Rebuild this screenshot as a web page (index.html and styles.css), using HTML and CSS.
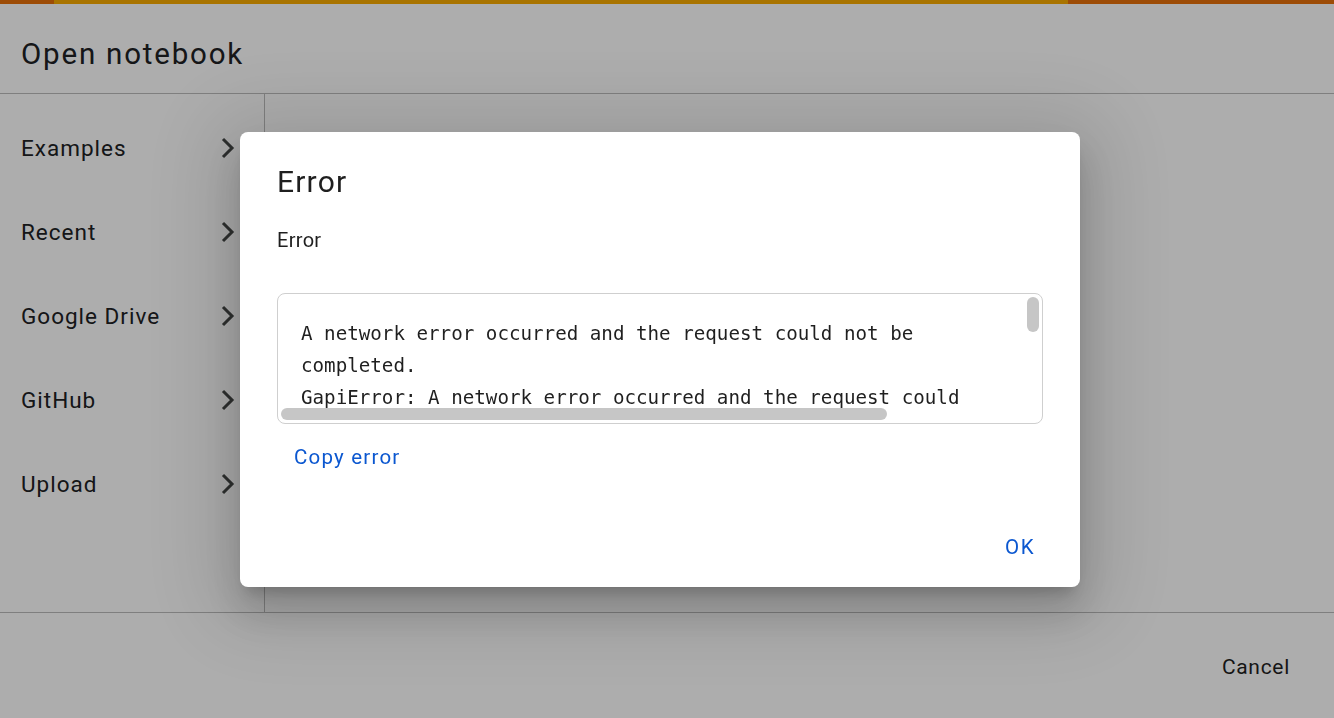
FILE: index.html
```html
<!DOCTYPE html>
<html lang="en">
<head>
<meta charset="utf-8">
<title>Open notebook</title>
<link rel="stylesheet" href="styles.css">
</head>
<body>
  <div class="progress">
    <span class="seg seg-orange seg-head"></span>
    <span class="seg seg-amber"></span>
    <span class="seg seg-orange"></span>
  </div>

  <div class="sheet">
    <header class="sheet-header">
      <h1 class="sheet-title">Open notebook</h1>
    </header>
    <div class="sheet-body">
      <nav class="sources">
        <div class="source"><span>Examples</span><svg class="chev" viewBox="0 0 16 22"><path d="M3 2 L12 11 L3 20"/></svg></div>
        <div class="source"><span>Recent</span><svg class="chev" viewBox="0 0 16 22"><path d="M3 2 L12 11 L3 20"/></svg></div>
        <div class="source"><span>Google Drive</span><svg class="chev" viewBox="0 0 16 22"><path d="M3 2 L12 11 L3 20"/></svg></div>
        <div class="source"><span>GitHub</span><svg class="chev" viewBox="0 0 16 22"><path d="M3 2 L12 11 L3 20"/></svg></div>
        <div class="source"><span>Upload</span><svg class="chev" viewBox="0 0 16 22"><path d="M3 2 L12 11 L3 20"/></svg></div>
      </nav>
      <section class="pane"></section>
    </div>
    <footer class="sheet-footer">
      <button class="text-btn dark">Cancel</button>
    </footer>
  </div>

  <div class="scrim"></div>

  <div class="dialog" role="alertdialog">
    <h2 class="dialog-title">Error</h2>
    <p class="dialog-msg">Error</p>
    <div class="trace">
      <pre class="trace-text">A network error occurred and the request could not be
completed.
GapiError: A network error occurred and the request could</pre>
      <span class="thumb-v"></span>
      <span class="thumb-h"></span>
    </div>
    <div class="copy-row">
      <button class="text-btn blue">Copy error</button>
    </div>
    <div class="dialog-actions">
      <button class="text-btn blue ok">OK</button>
    </div>
  </div>
</body>
</html>
```

FILE: styles.css
```css
* { box-sizing: border-box; }

html, body {
  margin: 0;
  height: 100%;
  overflow: hidden;
}

body {
  background: #ffffff;
  font-family: Roboto, "Noto Sans", Arial, sans-serif;
  color: #1f1f1f;
}

/* loading strip along the top edge */
.progress {
  display: flex;
  height: 4px;
}
.seg { display: block; height: 100%; }
.seg-orange { background: #e8710a; }
.seg-head { width: 54px; }
.seg-amber { background: #f9ab00; width: 1014px; }
.seg-orange:last-child { flex: 1; }

/* underlying "Open notebook" sheet */
.sheet {
  display: flex;
  flex-direction: column;
  height: 714px;
}
.sheet-header {
  height: 90px;
  border-bottom: 1px solid #bcbcbc;
  padding: 32px 0 0 21px;
}
.sheet-title {
  margin: 0;
  font-size: 29.5px;
  font-weight: 400;
  line-height: 36px;
  color: #202124;
  letter-spacing: 1.8px;
}
.sheet-body {
  display: flex;
  height: 519px;
  border-bottom: 1px solid #bcbcbc;
}
.sources {
  width: 265px;
  border-right: 1px solid #bcbcbc;
  padding-top: 12px;
}
.source {
  height: 84px;
  display: flex;
  align-items: center;
  justify-content: space-between;
  padding: 0 28px 0 21px;
  font-size: 22.5px;
  letter-spacing: 1px;
  color: #202124;
}
.chev {
  width: 16px;
  height: 22px;
  fill: none;
  stroke: #444746;
  stroke-width: 3;
}
.pane { flex: 1; }

.sheet-footer {
  flex: 1;
  display: flex;
  justify-content: flex-end;
  align-items: center;
  padding: 2px 32px 0 0;
}

.text-btn {
  border: none;
  background: none;
  font-family: inherit;
  font-size: 21px;
  padding: 8px 12px;
  cursor: pointer;
}
.text-btn.dark { color: #1f1f1f; letter-spacing: 0.7px; }
.text-btn.blue { color: #0b57d0; font-size: 20.5px; letter-spacing: 1.2px; }
.text-btn.ok { letter-spacing: 1.5px; }

/* modal backdrop */
.scrim {
  position: fixed;
  inset: 0;
  background: rgba(0, 0, 0, 0.32);
}

/* error dialog */
.dialog {
  position: fixed;
  left: 240px;
  top: 132px;
  width: 840px;
  height: 455px;
  background: #ffffff;
  border-radius: 8px;
  padding: 30px 37px 0 37px;
  display: flex;
  flex-direction: column;
  box-shadow: 0 11px 15px -7px rgba(0, 0, 0, 0.2),
              0 24px 38px 3px rgba(0, 0, 0, 0.14),
              0 9px 80px 30px rgba(0, 0, 0, 0.12);
}
.dialog-title {
  margin: 0;
  font-size: 30px;
  font-weight: 400;
  line-height: 40px;
  letter-spacing: 1.2px;
  color: #1f1f1f;
}
.dialog-msg {
  margin: 26px 0 0 0;
  font-size: 20px;
  line-height: 24px;
  letter-spacing: 0.3px;
  color: #1f1f1f;
}
.trace {
  position: relative;
  margin-top: 41px;
  height: 131px;
  border: 1px solid #cfcfcf;
  border-radius: 8px;
  overflow: hidden;
  padding: 24px 24px 0 23px;
}
.trace-text {
  margin: 0;
  font-family: "DejaVu Sans Mono", "Liberation Mono", monospace;
  font-size: 19.2px;
  line-height: 32px;
  color: #1f1f1f;
  white-space: pre;
}
.thumb-v {
  position: absolute;
  right: 3px;
  top: 3px;
  width: 12px;
  height: 35px;
  border-radius: 6px;
  background: #c6c6c6;
}
.thumb-h {
  position: absolute;
  left: 3px;
  bottom: 3px;
  width: 606px;
  height: 12px;
  border-radius: 6px;
  background: #c6c6c6;
}
.copy-row {
  margin-top: 13px;
  margin-left: 5px;
}
.dialog-actions {
  margin-top: auto;
  display: flex;
  justify-content: flex-end;
  padding: 0 0 20px 0;
  margin-right: -4px;
}
```
